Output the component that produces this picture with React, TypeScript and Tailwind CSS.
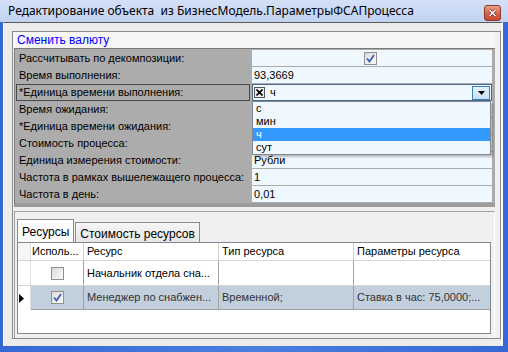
import React from "react";

const props = [
  { label: "Рассчитывать по декомпозиции:", kind: "check" },
  { label: "Время выполнения:", value: "93,3669" },
  { label: "*Единица времени выполнения:", kind: "combo" },
  { label: "Время ожидания:", value: "" },
  { label: "*Единица времени ожидания:", value: "" },
  { label: "Стоимость процесса:", value: "" },
  { label: "Единица измерения стоимости:", value: "Рубли" },
  { label: "Частота в рамках вышележащего процесса:", value: "1" },
  { label: "Частота в день:", value: "0,01" },
];

const units = ["с", "мин", "ч", "сут"];

function CheckBox({ checked }: { checked?: boolean }) {
  return (
    <div className="w-[13px] h-[13px] border border-[#8f8f8f] bg-gradient-to-br from-[#dcdcdc] to-[#fbfbfb] flex items-center justify-center">
      {checked && (
        <svg width="9" height="9" viewBox="0 0 9 9">
          <path d="M1 4.5 L3.5 7.5 L8 1" fill="none" stroke="#3c5fb8" strokeWidth="1.8" />
        </svg>
      )}
    </div>
  );
}

export default function App() {
  return (
    <div
      className="w-[508px] h-[352px] flex flex-col bg-[#3a6edb] overflow-hidden text-black whitespace-nowrap"
      style={{ fontFamily: '"Liberation Sans", Arial, sans-serif' }}
    >
      {/* title bar */}
      <div className="h-[22px] shrink-0 bg-gradient-to-b from-[#d3e0f7] to-[#c2d2f1] flex items-center justify-between pl-[8px] pr-[7px]">
        <span className="text-[12px] text-black" style={{ fontFamily: '"Noto Sans", sans-serif' }}>
          Редактирование объекта&nbsp; из БизнесМодель.ПараметрыФСАПроцесса
        </span>
        <div className="w-[17px] h-[16px] mt-[3px] rounded-[3px] border border-[#8b3a2a] bg-gradient-to-b from-[#eba08c] via-[#d9664c] to-[#c8452c] flex items-center justify-center">
          <svg width="9" height="8" viewBox="0 0 9 8">
            <path d="M1.5 1 L7.5 7 M7.5 1 L1.5 7" stroke="#5a2a20" strokeWidth="2.6" />
            <path d="M1.5 1 L7.5 7 M7.5 1 L1.5 7" stroke="#ffffff" strokeWidth="1.6" />
          </svg>
        </div>
      </div>

      {/* window body */}
      <div className="flex-1 flex flex-col pl-[3px] pr-[5px] pb-[6px] bg-gradient-to-r from-[#3568d4] via-[#4a7ee0] to-[#3568d4]">
        <div className="flex-1 flex flex-col bg-[#ececec] border-t border-t-[#5a5a5a] border-l border-l-white border-r-2 border-r-white pl-[8px] pt-[8px] pb-[7px]">
          <div className="flex-1 flex flex-col border border-[#8a8a8a] bg-[#f0f0f0]">
            {/* link */}
            <div className="h-[16px] pl-[4px] mr-[5px] flex items-center text-[12px] text-[#0000ff] bg-[#f6f6f6]">
              Сменить валюту
            </div>

            {/* property grid */}
            <div className="relative ml-[1px] mr-[5px] flex flex-col bg-[#acacac] border-t border-l border-[#7a7a7a] pt-[1px] border-b-[4px] border-b-[#9c9c9c] pr-[3px] text-[11px]">
              {props.map((p, i) => (
                <div key={i} className="h-[17px] flex">
                  <div className="w-[236px] shrink-0 pl-[1px] pr-[1px] flex">
                    <div
                      className={`flex-1 flex items-center ${
                        p.kind === "combo" ? "border border-[#4a4a4a] pl-[2px]" : "pl-[3px]"
                      }`}
                    >
                      {p.label}
                    </div>
                  </div>
                  <div className="w-[1px] shrink-0" />
                  {p.kind === "combo" ? (
                    <div className="flex-1 h-[17px] border border-[#4d6a8a] bg-[#f0f8ff] flex items-center pl-[1px] pr-[1px]">
                      <div className="w-[11px] h-[11px] border border-[#555] bg-[#eeeeee] flex items-center justify-center">
                        <svg width="7" height="7" viewBox="0 0 7 7">
                          <path d="M0.5 0.5 L6.5 6.5 M6.5 0.5 L0.5 6.5" stroke="#000" strokeWidth="1.6" />
                        </svg>
                      </div>
                      <span className="ml-[5px]">ч</span>
                      <div className="ml-auto w-[18px] h-[14px] border border-[#3c7fb1] bg-gradient-to-b from-[#e5f1fb] to-[#c4e0f6] flex items-center justify-center">
                        <svg width="7" height="4" viewBox="0 0 7 4">
                          <path d="M0 0 L7 0 L3.5 4 Z" fill="#000" />
                        </svg>
                      </div>
                    </div>
                  ) : (
                    <div className="flex-1 h-[16px] bg-[#f0f8ff] flex items-center pl-[2px]">
                      {p.kind === "check" ? (
                        <div className="ml-[110px]">
                          <CheckBox checked />
                        </div>
                      ) : (
                        p.value
                      )}
                    </div>
                  )}
                </div>
              ))}

              {/* open dropdown */}
              <div className="absolute left-[237px] top-[52px] w-[239px] h-[54px] border border-[#828790] bg-[#f0f8ff] shadow-[2px_2px_2px_rgba(0,0,0,0.25)]">
                {units.map((u) => (
                  <div
                    key={u}
                    className={`h-[13px] leading-[13px] pl-[3px] ${u === "ч" ? "bg-[#3399ff] text-white" : ""}`}
                  >
                    {u}
                  </div>
                ))}
              </div>
            </div>

            {/* tab control */}
            <div className="flex-1 flex flex-col mt-[4px] ml-[1px] mr-[5px] border-t border-l border-[#a0a0a0] border-r border-r-white pl-[2px] pr-[3px] pt-[7px] pb-[4px]">
              <div className="flex items-end h-[23px] text-[12px]">
                <div className="h-[23px] px-[4px] pt-[3px] border border-b-0 border-[#898c95] bg-[#fcfcfc]">Ресурсы</div>
                <div className="h-[20px] ml-[1px] px-[4px] pt-[2px] border border-b-0 border-[#898c95] bg-gradient-to-b from-[#f6f6f6] to-[#e6e6e6]">
                  Стоимость ресурсов
                </div>
              </div>

              <div className="flex-1 border border-[#828790] bg-white text-[11px]">
                {/* header */}
                <div className="h-[18px] flex border-b border-[#d5d5d5]">
                  <div className="w-[13px] bg-[#f6f6f6] border-r border-[#e0e0e0]" />
                  <div className="w-[53px] pl-[1px] flex items-center border-r border-[#d0d0d0]">Исполь...</div>
                  <div className="w-[135px] pl-[3px] flex items-center border-r border-[#d0d0d0]">Ресурс</div>
                  <div className="w-[135px] pl-[3px] flex items-center border-r border-[#d0d0d0]">Тип ресурса</div>
                  <div className="w-[136px] pl-[3px] flex items-center">Параметры ресурса</div>
                </div>
                {/* row 1 */}
                <div className="h-[25px] flex border-b border-[#d5d5d5]">
                  <div className="w-[13px] border-r border-[#e0e0e0]" />
                  <div className="w-[53px] flex items-center justify-center border-r border-[#a0a0a0]">
                    <CheckBox />
                  </div>
                  <div className="w-[135px] pl-[3px] flex items-center border-r border-[#a0a0a0]">Начальник отдела сна...</div>
                  <div className="w-[135px] border-r border-[#a0a0a0]" />
                  <div className="w-[136px]" />
                </div>
                {/* row 2 */}
                <div className="h-[24px] flex">
                  <div className="w-[13px] flex items-center pl-[1px] border-r border-[#e0e0e0]">
                    <svg width="5" height="9" viewBox="0 0 5 9">
                      <path d="M0 0 L5 4.5 L0 9 Z" fill="#000" />
                    </svg>
                  </div>
                  <div className="flex flex-1 bg-[#c2cfdd] text-[#333] border-b border-[#a0a0a0]">
                    <div className="w-[53px] flex items-center justify-center border-r border-[#a0a0a0]">
                      <CheckBox checked />
                    </div>
                    <div className="w-[135px] pl-[3px] flex items-center border-r border-[#a0a0a0]">Менеджер по снабжен...</div>
                    <div className="w-[135px] pl-[3px] flex items-center border-r border-[#a0a0a0]">Временной;</div>
                    <div className="w-[136px] pl-[3px] flex items-center">Ставка в час: 75,0000;...</div>
                  </div>
                </div>
              </div>
            </div>
          </div>
        </div>
      </div>
    </div>
  );
}
